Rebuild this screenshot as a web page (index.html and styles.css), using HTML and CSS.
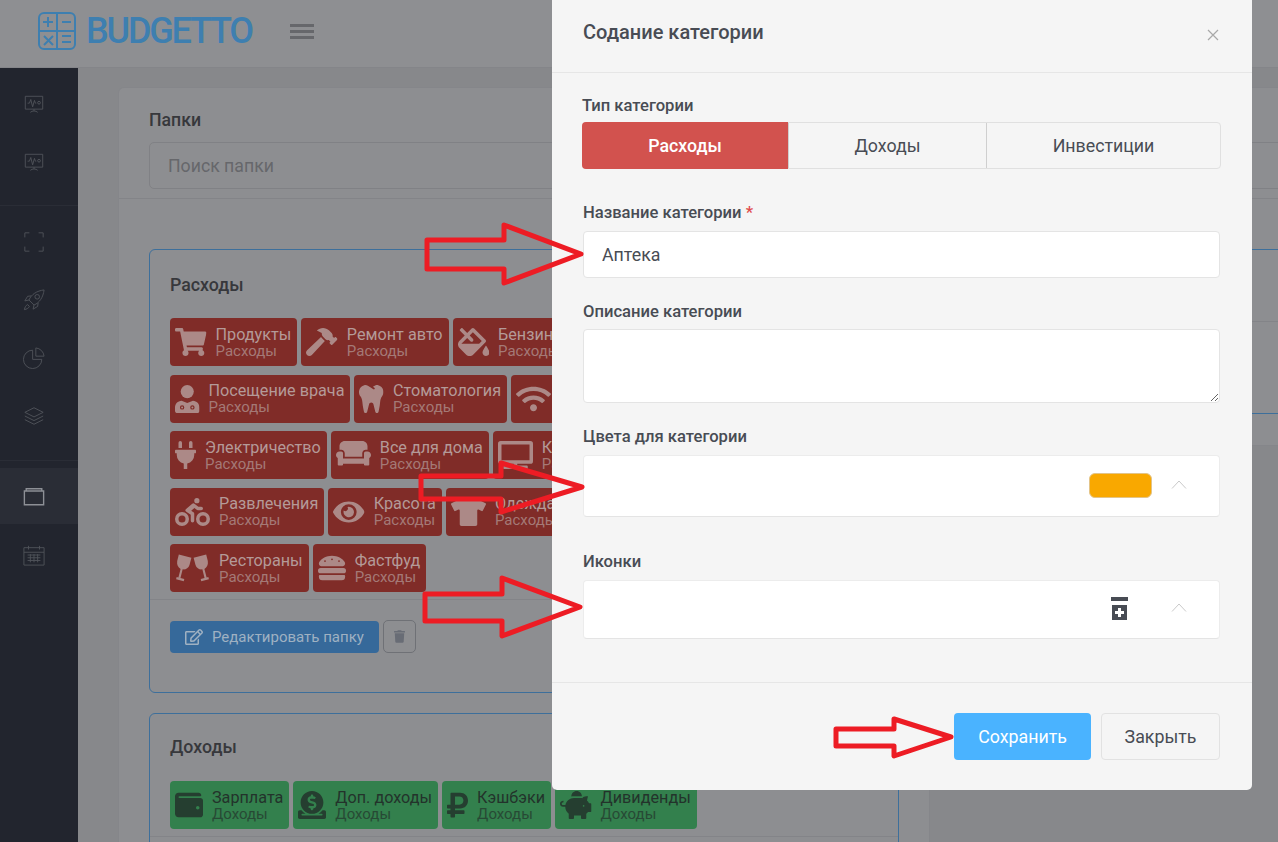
FILE: index.html
```html
<!DOCTYPE html>
<html lang="en">
<head>
    <meta charset="UTF-8">
    <title>Budgetto</title>
    <link rel="stylesheet" href="styles.css">
</head>
<body>
    <svg class="sprite" xmlns="http://www.w3.org/2000/svg">
        <symbol id="i-cart" viewBox="0 0 576 512"><path d="M528.12 301.319l47.273-208C578.806 78.301 567.391 64 551.99 64H159.208l-9.166-44.81C147.758 8.021 137.93 0 126.529 0H24C10.745 0 0 10.745 0 24v16c0 13.255 10.745 24 24 24h69.883l70.248 343.435C147.325 417.1 136 435.222 136 456c0 30.928 25.072 56 56 56s56-25.072 56-56c0-15.674-6.447-29.835-16.824-40h209.647C430.447 426.165 424 440.326 424 456c0 30.928 25.072 56 56 56s56-25.072 56-56c0-22.172-12.888-41.332-31.579-50.405l5.517-24.276c3.413-15.018-8.002-29.319-23.403-29.319H218.117l-6.545-32h293.145c11.206 0 20.92-7.754 23.403-18.681z"/></symbol>
        <symbol id="i-hammer" viewBox="0 0 576 512"><path d="M571.31 193.94l-22.63-22.63c-6.25-6.25-16.38-6.25-22.63 0l-11.31 11.31-28.9-28.9c5.63-21.31.36-44.9-16.35-61.61l-45.25-45.25c-62.48-62.48-163.79-62.48-226.28 0l90.51 45.25v18.75c0 16.97 6.74 33.25 18.75 45.25l49.14 49.14c16.71 16.71 40.3 21.98 61.61 16.35l28.9 28.9-11.31 11.31c-6.25 6.25-6.25 16.38 0 22.63l22.63 22.63c6.25 6.25 16.38 6.25 22.63 0l90.51-90.51c6.23-6.24 6.23-16.37-.02-22.62zm-286.72-15.2c-3.7-3.7-6.84-7.79-9.85-11.95L19.64 404.96c-25.57 23.88-26.26 64.19-1.53 88.93s65.05 24.05 88.93-1.53l238.13-255.07c-3.96-2.91-7.9-5.9-11.44-9.44l-49.14-49.14z"/></symbol>
        <symbol id="i-fill" viewBox="0 0 576 512"><path d="M512 320s-64 92.65-64 128c0 35.35 28.66 64 64 64s64-28.65 64-64-64-128-64-128zm-9.37-102.94L294.94 9.37C288.69 3.12 280.5 0 272.31 0s-16.38 3.12-22.62 9.37l-81.58 81.58L81.93 4.76c-6.25-6.25-16.38-6.25-22.62 0L36.69 27.38c-6.24 6.25-6.24 16.38 0 22.62l86.19 86.18-94.76 94.76c-37.49 37.48-37.49 98.26 0 135.75l117.19 117.19c18.74 18.74 43.31 28.12 67.87 28.12 24.57 0 49.13-9.37 67.87-28.12l221.57-221.57c12.5-12.5 12.5-32.75.01-45.25zm-116.22 70.97H65.93c1.36-3.84 3.57-7.98 7.43-11.83l13.15-13.15 81.61-81.61 58.6 58.6c12.49 12.49 32.75 12.49 45.24 0 12.49-12.49 12.49-32.75 0-45.24l-58.6-58.6 58.95-58.95 162.44 162.44-48.34 48.34z"/></symbol>
        <symbol id="i-doctor" viewBox="0 0 448 512"><path d="M224 240a120 120 0 1 0 0-240 120 120 0 0 0 0 240z"/><path fill-rule="evenodd" d="M0 464v-50c0-70 50-122 120-126l104 40 104-40c70 4 120 56 120 126v50a48 48 0 0 1-48 48H48a48 48 0 0 1-48-48zM130 370a40 40 0 1 0 0 80 40 40 0 0 0 0-80zm0 22a18 18 0 1 1 0 36 18 18 0 0 1 0-36zM318 370a40 40 0 1 0 0 80 40 40 0 0 0 0-80zm0 22a18 18 0 1 1 0 36 18 18 0 0 1 0-36z"/></symbol>
        <symbol id="i-tooth" viewBox="0 0 448 512"><path d="M443.98 96.25c-11.01-45.22-47.11-82.06-92.01-93.72-32.19-8.36-63 5.1-89.14 24.33-3.25 2.39-6.96 3.73-10.5 5.48l28.32 18.21c7.42 4.77 9.58 14.67 4.8 22.11-4.46 6.95-14.27 9.86-22.11 4.8L162.83 12.84c-20.7-10.85-43.38-16.4-66.81-10.31-44.9 11.67-81 48.5-92.01 93.72-10.13 41.62-.42 80.81 21.5 110.43 23.36 31.57 32.68 68.66 36.29 107.35 4.4 47.16 10.33 94.16 20.94 140.32l7.8 33.95c3.19 13.87 15.49 23.7 29.67 23.7 13.97 0 26.15-9.55 29.54-23.16l34.47-138.42c4.56-18.32 20.96-31.16 39.76-31.16s35.2 12.85 39.76 31.16l34.47 138.42c3.39 13.61 15.57 23.16 29.54 23.16 14.18 0 26.48-9.83 29.67-23.7l7.8-33.95c10.61-46.15 16.53-93.16 20.94-140.32 3.61-38.7 12.93-75.78 36.29-107.35 21.95-29.61 31.66-68.8 21.53-110.43z"/></symbol>
        <symbol id="i-wifi" viewBox="0 0 640 512"><path d="M634.91 154.88C457.74-8.99 182.19-8.93 5.09 154.88c-6.66 6.16-6.79 16.59-.35 22.98l34.24 33.97c6.14 6.1 16.02 6.23 22.4.38 145.92-133.68 371.3-133.71 517.25 0 6.38 5.85 16.26 5.71 22.4-.38l34.24-33.97c6.43-6.39 6.3-16.82-.36-22.98zM320 352c-35.35 0-64 28.65-64 64s28.65 64 64 64 64-28.65 64-64-28.65-64-64-64zm202.67-83.59c-115.26-101.93-290.21-101.82-405.34 0-6.9 6.1-7.12 16.69-.57 23.15l34.44 33.99c6 5.92 15.66 6.32 22.05.8 83.95-72.57 209.74-72.41 293.49 0 6.39 5.52 16.05 5.13 22.05-.8l34.44-33.99c6.56-6.46 6.33-17.06-.56-23.15z"/></symbol>
        <symbol id="i-plug" viewBox="0 0 384 512"><path d="M320,32a32,32,0,0,0-64,0v96h64Zm48,128H16A16,16,0,0,0,0,176v32a16,16,0,0,0,16,16H32v32A160.07,160.07,0,0,0,160,412.8V512h64V412.8A160.07,160.07,0,0,0,352,256V224h16a16,16,0,0,0,16-16V176A16,16,0,0,0,368,160ZM128,32a32,32,0,0,0-64,0v96h64Z"/></symbol>
        <symbol id="i-couch" viewBox="0 0 640 512"><path d="M160 224v64h320v-64c0-35.3 28.7-64 64-64h32V96c0-53-43-96-96-96H160C107 0 64 43 64 96v64h32c35.3 0 64 28.7 64 64zm416-32h-32c-17.7 0-32 14.3-32 32v96H128v-96c0-17.7-14.3-32-32-32H64c-35.3 0-64 28.7-64 64 0 23.6 13 44 32 55.1V432c0 8.8 7.2 16 16 16h64c8.8 0 16-7.2 16-16v-16h384v16c0 8.8 7.2 16 16 16h64c8.8 0 16-7.2 16-16V311.1c19-11.1 32-31.5 32-55.1 0-35.3-28.7-64-64-64z"/></symbol>
        <symbol id="i-tv" viewBox="0 0 640 512"><path d="M592 0H48A48 48 0 0 0 0 48v320a48 48 0 0 0 48 48h240v32H112a16 16 0 0 0-16 16v32a16 16 0 0 0 16 16h416a16 16 0 0 0 16-16v-32a16 16 0 0 0-16-16H352v-32h240a48 48 0 0 0 48-48V48a48 48 0 0 0-48-48zm-16 352H64V64h512z"/></symbol>
        <symbol id="i-bike" viewBox="0 0 640 512"><path d="M400 96a48 48 0 1 0-48-48 48 48 0 0 0 48 48zm-4 121a31.9 31.9 0 0 0 20 7h64a32 32 0 0 0 0-64h-52.78L356 103a31.94 31.94 0 0 0-40.81.68l-112 96a32 32 0 0 0 3.08 50.92L288 305.12V416a32 32 0 0 0 64 0V288a32 32 0 0 0-14.25-26.62l-41.36-27.57 58.25-49.92zm116 39a128 128 0 1 0 128 128 128 128 0 0 0-128-128zm0 192a64 64 0 1 1 64-64 64 64 0 0 1-64 64zM128 256a128 128 0 1 0 128 128 128 128 0 0 0-128-128zm0 192a64 64 0 1 1 64-64 64 64 0 0 1-64 64z"/></symbol>
        <symbol id="i-eye" viewBox="0 0 576 512"><path d="M572.52 241.4C518.29 135.59 410.93 64 288 64S57.68 135.64 3.48 241.41a32.35 32.35 0 0 0 0 29.19C57.71 376.41 165.07 448 288 448s230.32-71.64 284.52-177.41a32.35 32.35 0 0 0 0-29.19zM288 400a144 144 0 1 1 144-144 143.93 143.93 0 0 1-144 144zm0-240a95.31 95.31 0 0 0-25.31 3.79 47.85 47.85 0 0 1-66.9 66.9A95.78 95.78 0 1 0 288 160z"/></symbol>
        <symbol id="i-shirt" viewBox="0 0 640 512"><path d="M631.2 96.5L436.5 0C416.4 27.8 371.9 47.2 320 47.2S223.6 27.8 203.5 0L8.8 96.5c-7.9 4-11.1 13.6-7.2 21.5l57.2 114.5c4 7.9 13.6 11.1 21.5 7.2l56.6-27.7c10.6-5.2 23 2.5 23 14.4V480c0 17.7 14.3 32 32 32h256c17.7 0 32-14.3 32-32V226.3c0-11.8 12.4-19.6 23-14.4l56.6 27.7c7.9 4 17.5.8 21.5-7.2L638.3 118c4-7.9.8-17.6-7.1-21.5z"/></symbol>
        <symbol id="i-cheers" viewBox="0 0 640 512">
            <path d="M70 10L300 70L265 200C245 260 190 290 140 280L100 440L170 458L160 496L20 460L30 422L62 430L102 272C55 250 30 200 40 130Z"/>
            <path transform="matrix(-1 0 0 1 640 0)" d="M70 10L300 70L265 200C245 260 190 290 140 280L100 440L170 458L160 496L20 460L30 422L62 430L102 272C55 250 30 200 40 130Z"/>
        </symbol>
        <symbol id="i-burger" viewBox="0 0 512 512"><path d="M464 256H48a48 48 0 0 0 0 96h416a48 48 0 0 0 0-96zm16 128H32a16 16 0 0 0-16 16v16a64 64 0 0 0 64 64h352a64 64 0 0 0 64-64v-16a16 16 0 0 0-16-16zM58.64 224h394.72c34.57 0 54.62-43.9 34.82-75.88C448 83.2 359.55 32.1 256 32c-103.54.1-192 51.2-232.18 116.11C4 180.09 24.07 224 58.64 224zM384 112a16 16 0 1 1-16 16 16 16 0 0 1 16-16zM256 80a16 16 0 1 1-16 16 16 16 0 0 1 16-16zm-128 32a16 16 0 1 1-16 16 16 16 0 0 1 16-16z"/></symbol>
        <symbol id="i-wallet" viewBox="0 0 512 512"><path d="M461.2 128H80c-8.84 0-16-7.16-16-16s7.16-16 16-16h384c8.84 0 16-7.16 16-16 0-26.51-21.49-48-48-48H64C28.65 32 0 60.65 0 96v320c0 35.35 28.65 64 64 64h397.2c28.02 0 50.8-21.53 50.8-48V176c0-26.47-22.78-48-50.8-48zM416 336c-17.67 0-32-14.33-32-32s14.33-32 32-32 32 14.33 32 32-14.33 32-32 32z"/></symbol>
        <symbol id="i-donate" viewBox="0 0 512 512"><path d="M256 416c114.9 0 208-93.1 208-208S370.9 0 256 0 48 93.1 48 208s93.1 208 208 208zM233.8 97.4V80.6c0-9.2 7.4-16.6 16.6-16.6h11.1c9.2 0 16.6 7.4 16.6 16.6v17c15.5.8 30.5 6.1 43 15.4 5.6 4.1 6.2 12.3 1.2 17.1L306 145.6c-3.8 3.7-9.5 3.8-14 1-5.4-3.4-11.4-5.1-17.8-5.1h-38.9c-9 0-16.3 8.2-16.3 18.3 0 8.2 5 15.5 12.1 17.6l62.3 18.7c25.7 7.7 43.7 32.4 43.7 60.1 0 34-26.4 61.5-59.1 62.4v16.8c0 9.2-7.4 16.6-16.6 16.6h-11.1c-9.2 0-16.6-7.4-16.6-16.6v-17c-15.5-.8-30.5-6.1-43-15.4-5.6-4.1-6.2-12.3-1.2-17.1l16.3-15.5c3.8-3.7 9.5-3.8 14-1 5.4 3.4 11.4 5.1 17.8 5.1h38.9c9 0 16.3-8.2 16.3-18.3 0-8.2-5-15.5-12.1-17.6l-62.3-18.7c-25.7-7.7-43.7-32.4-43.7-60.1.1-34 26.4-61.5 59.1-62.4zM480 352h-32.5c-19.6 26-44.6 47.7-73 64h63.8c5.3 0 9.6 3.6 9.6 8v16c0 4.4-4.3 8-9.6 8H73.6c-5.3 0-9.6-3.6-9.6-8v-16c0-4.4 4.3-8 9.6-8h63.8c-28.4-16.3-53.3-38-73-64H32c-17.7 0-32 14.3-32 32v96c0 17.7 14.3 32 32 32h448c17.7 0 32-14.3 32-32v-96c0-17.7-14.3-32-32-32z"/></symbol>
        <symbol id="i-ruble" viewBox="0 0 384 512"><path d="M239.36 320C324.48 320 384 260.542 384 175.071S324.48 32 239.36 32H76c-6.627 0-12 5.373-12 12v206.632H12c-6.627 0-12 5.373-12 12V308c0 6.627 5.373 12 12 12h52v32H12c-6.627 0-12 5.373-12 12v44c0 6.627 5.373 12 12 12h52v52c0 6.627 5.373 12 12 12h58.56c6.627 0 12-5.373 12-12v-52H308c6.627 0 12-5.373 12-12v-44c0-6.627-5.373-12-12-12H146.56v-32h92.8zm-92.8-219.252h78.72c46.72 0 74.88 29.11 74.88 74.323 0 45.832-28.16 75.561-76.16 75.561h-77.44V100.748z"/></symbol>
        <symbol id="i-piggy" viewBox="0 0 576 512"><path d="M560 224h-29.5c-8.8-20-21.6-37.7-37.4-52.5L512 96h-32c-29.4 0-55.4 13.5-73 34.3-7.6-1.1-15.1-2.3-23-2.3H256c-77.4 0-141.9 55-156.8 128H56c-14.8 0-26.5-13.5-23.5-28.8C34.7 215.8 45.4 208 57 208h1c3.3 0 6-2.7 6-6v-20c0-3.3-2.7-6-6-6-28.5 0-53.9 20.4-57.5 48.6C-3.9 258.8 22.7 288 56 288h40c0 52.2 25.4 98.1 64 127.3V496c0 8.8 7.2 16 16 16h64c8.8 0 16-7.2 16-16v-48h128v48c0 8.8 7.2 16 16 16h64c8.8 0 16-7.2 16-16v-80.9c11.8-8.9 22.3-19.4 31.3-31.1H560c8.8 0 16-7.2 16-16V240c0-8.8-7.2-16-16-16zm-128 64c-8.8 0-16-7.2-16-16s7.2-16 16-16 16 7.2 16 16-7.2 16-16 16zM256 96h128c5.4 0 10.7.4 15.9.8 0-.3.1-.5.1-.8 0-53-43-96-96-96s-96 43-96 96c0 2.1.5 4.1.6 6.2 15.2-3.9 31-6.2 47.4-6.2z"/></symbol>
        <symbol id="i-edit" viewBox="0 0 576 512"><path d="M402.3 344.9l32-32c5-5 13.7-1.5 13.7 5.7V464c0 26.5-21.5 48-48 48H48c-26.5 0-48-21.5-48-48V112c0-26.5 21.5-48 48-48h273.5c7.1 0 10.7 8.6 5.7 13.7l-32 32c-1.5 1.5-3.5 2.3-5.7 2.3H48v352h352V350.5c0-2.1.8-4.1 2.3-5.6zm156.6-201.8L296.3 405.7l-90.4 10c-26.2 2.9-48.5-19.2-45.6-45.6l10-90.4L432.9 17.1c22.9-22.9 59.9-22.9 82.7 0l43.2 43.2c22.9 22.9 22.9 60 .1 82.8zM460.1 174L402 115.9 216.2 301.8l-7.3 65.3 65.3-7.3L460.1 174zm64.8-79.7l-43.2-43.2c-4.1-4.1-10.8-4.1-14.8 0L436 82l58.1 58.1 30.9-30.9c4-4.2 4-10.8-.1-14.9z"/></symbol>
        <symbol id="i-trash" viewBox="0 0 448 512"><path d="M432 32H312l-9.4-18.7A24 24 0 0 0 281.1 0H166.8a23.72 23.72 0 0 0-21.4 13.3L136 32H16A16 16 0 0 0 0 48v32a16 16 0 0 0 16 16h416a16 16 0 0 0 16-16V48a16 16 0 0 0-16-16zM53.2 467a48 48 0 0 0 47.9 45h245.8a48 48 0 0 0 47.9-45L416 128H32z"/></symbol>
        <symbol id="n-monitor" viewBox="0 0 24 24"><path d="M2.500 2.500h19v14h-19zM12 16.500v2M8 20c2-2 6-2 8 0M5 10h2l1.500-4 2 8 2-7 1 3h1"/><circle cx="17.500" cy="9.500" r="1.500"/></symbol>
        <symbol id="n-focus" viewBox="0 0 24 24"><path d="M2 7V2h5M17 2h5v5M22 17v5h-5M7 22H2v-5"/></symbol>
        <symbol id="n-rocket" viewBox="0 0 24 24"><path d="M23 1C15 2 9 6 6.500 12l5.500 5.500C18 15 22 9 23 1zM6.500 12L2 13l3-5 4-.5M12 17.500L11 22l5-3 .5-4M5 17c-2 1-3 3-3.500 5.500C4 22 6 21 7 19z"/><circle cx="15.500" cy="8.500" r="2.500"/></symbol>
        <symbol id="n-pie" viewBox="0 0 24 24"><path d="M10.500 3.500a10 10 0 1 0 10 10h-10zM14 1a10 10 0 0 1 9 9h-9z"/></symbol>
        <symbol id="n-layers" viewBox="0 0 24 24"><path d="M12 3l10 5-10 5L2 8zM2 12l10 5 10-5M2 16l10 5 10-5"/></symbol>
        <symbol id="n-window" viewBox="0 0 24 24"><path d="M1.500 5.500h21v15h-21zM3.500 3h17v2.500h-17z"/></symbol>
        <symbol id="n-calendar" viewBox="0 0 24 24"><path d="M1 4h22v19H1zM1 9h22M6 2v4M18 2v4M5 12h14M5 15h14M5 18h14M8 11v9M12 11v9M16 11v9"/></symbol>
    </svg>

    <header class="topbar">
        <a class="logo">
            <svg class="logo-icon" viewBox="0 0 38 38">
                <rect x="1" y="1" width="36" height="36" rx="5"/>
                <path d="M19 1v36M1 19h36M10 5v10M5 10h10M24 10h9M24 24h9M24 30h9M6 24l9 9M15 24l-9 9"/>
            </svg>
            <span class="logo-text">BUDGETTO</span>
        </a>
        <div class="burger"><span></span><span></span><span></span></div>
    </header>

    <div class="layout">
        <nav class="sidebar">
            <div class="nav-group">
                <div class="nav-item"><svg class="nav-icon"><use href="#n-monitor"/></svg></div>
                <div class="nav-item"><svg class="nav-icon"><use href="#n-monitor"/></svg></div>
            </div>
            <div class="nav-group">
                <div class="nav-item"><svg class="nav-icon"><use href="#n-focus"/></svg></div>
                <div class="nav-item"><svg class="nav-icon"><use href="#n-rocket"/></svg></div>
                <div class="nav-item"><svg class="nav-icon"><use href="#n-pie"/></svg></div>
                <div class="nav-item"><svg class="nav-icon"><use href="#n-layers"/></svg></div>
            </div>
            <div class="nav-group">
                <div class="nav-item active"><svg class="nav-icon"><use href="#n-window"/></svg></div>
                <div class="nav-item"><svg class="nav-icon"><use href="#n-calendar"/></svg></div>
            </div>
        </nav>

        <main class="content">
            <section class="panel">
                <div class="panel-head">
                    <div class="panel-title">Папки</div>
                    <div class="search">Поиск папки</div>
                </div>
                <div class="panel-body">
                    <div class="folder">
                        <div class="folder-title">Расходы</div>
                        <div class="tags">
                            <div class="tag-row">
                                <div class="tag red"><svg class="tag-icon w576"><use href="#i-cart"/></svg><div><div class="tag-name">Продукты</div><div class="tag-type">Расходы</div></div></div>
                                <div class="tag red"><svg class="tag-icon w576"><use href="#i-hammer"/></svg><div><div class="tag-name">Ремонт авто</div><div class="tag-type">Расходы</div></div></div>
                                <div class="tag red"><svg class="tag-icon w576"><use href="#i-fill"/></svg><div><div class="tag-name">Бензин</div><div class="tag-type">Расходы</div></div></div>
                            </div>
                            <div class="tag-row">
                                <div class="tag red"><svg class="tag-icon w448"><use href="#i-doctor"/></svg><div><div class="tag-name">Посещение врача</div><div class="tag-type">Расходы</div></div></div>
                                <div class="tag red"><svg class="tag-icon w448"><use href="#i-tooth"/></svg><div><div class="tag-name">Стоматология</div><div class="tag-type">Расходы</div></div></div>
                                <div class="tag red"><svg class="tag-icon w640"><use href="#i-wifi"/></svg><div><div class="tag-name">Интернет</div><div class="tag-type">Расходы</div></div></div>
                            </div>
                            <div class="tag-row">
                                <div class="tag red"><svg class="tag-icon w384"><use href="#i-plug"/></svg><div><div class="tag-name">Электричество</div><div class="tag-type">Расходы</div></div></div>
                                <div class="tag red"><svg class="tag-icon w640"><use href="#i-couch"/></svg><div><div class="tag-name">Все для дома</div><div class="tag-type">Расходы</div></div></div>
                                <div class="tag red"><svg class="tag-icon w640"><use href="#i-tv"/></svg><div><div class="tag-name">Кино</div><div class="tag-type">Расходы</div></div></div>
                            </div>
                            <div class="tag-row">
                                <div class="tag red"><svg class="tag-icon w640"><use href="#i-bike"/></svg><div><div class="tag-name">Развлечения</div><div class="tag-type">Расходы</div></div></div>
                                <div class="tag red"><svg class="tag-icon w576"><use href="#i-eye"/></svg><div><div class="tag-name">Красота</div><div class="tag-type">Расходы</div></div></div>
                                <div class="tag red"><svg class="tag-icon w640"><use href="#i-shirt"/></svg><div><div class="tag-name">Одежда</div><div class="tag-type">Расходы</div></div></div>
                            </div>
                            <div class="tag-row">
                                <div class="tag red"><svg class="tag-icon w640"><use href="#i-cheers"/></svg><div><div class="tag-name">Рестораны</div><div class="tag-type">Расходы</div></div></div>
                                <div class="tag red"><svg class="tag-icon w512"><use href="#i-burger"/></svg><div><div class="tag-name">Фастфуд</div><div class="tag-type">Расходы</div></div></div>
                            </div>
                        </div>
                        <div class="folder-foot">
                            <button class="btn-edit"><svg class="btn-edit-icon"><use href="#i-edit"/></svg>Редактировать папку</button>
                            <button class="btn-trash"><svg class="btn-trash-icon"><use href="#i-trash"/></svg></button>
                        </div>
                    </div>

                    <div class="folder">
                        <div class="folder-title">Доходы</div>
                        <div class="tags">
                            <div class="tag-row">
                                <div class="tag green"><svg class="tag-icon w512"><use href="#i-wallet"/></svg><div><div class="tag-name">Зарплата</div><div class="tag-type">Доходы</div></div></div>
                                <div class="tag green"><svg class="tag-icon w512"><use href="#i-donate"/></svg><div><div class="tag-name">Доп. доходы</div><div class="tag-type">Доходы</div></div></div>
                                <div class="tag green"><svg class="tag-icon w384"><use href="#i-ruble"/></svg><div><div class="tag-name">Кэшбэки</div><div class="tag-type">Доходы</div></div></div>
                                <div class="tag green"><svg class="tag-icon w576"><use href="#i-piggy"/></svg><div><div class="tag-name">Дивиденды</div><div class="tag-type">Доходы</div></div></div>
                            </div>
                        </div>
                        <div class="folder-foot"></div>
                    </div>
                </div>
            </section>

            <section class="panel side">
                <div class="panel-head">
                    <div class="panel-title">Шаблоны</div>
                    <div class="search"></div>
                </div>
                <div class="panel-body">
                    <div class="folder small">
                        <div class="small-top"></div>
                    </div>
                </div>
            </section>
        </main>
    </div>

    <div class="modal">
        <div class="modal-head">
            <div class="modal-title">Содание категории</div>
            <svg class="modal-close" viewBox="0 0 12 12"><path d="M1 1l10 10M11 1L1 11"/></svg>
        </div>
        <div class="modal-body">
            <div class="field-label first">Тип категории</div>
            <div class="segments">
                <div class="segment active">Расходы</div>
                <div class="segment">Доходы</div>
                <div class="segment">Инвестиции</div>
            </div>

            <div class="field-label">Название категории <span class="req">*</span></div>
            <input class="text-input" type="text" value="Аптека">

            <div class="field-label">Описание категории</div>
            <textarea class="text-area"></textarea>

            <div class="field-label">Цвета для категории</div>
            <div class="picker color">
                <div class="picker-value"><span class="swatch"></span></div>
                <svg class="chevron" viewBox="0 0 16 9"><path d="M1 8.500l7-7.500 7 7.500"/></svg>
            </div>

            <div class="field-label wide">Иконки</div>
            <div class="picker icon">
                <div class="picker-value">
                    <svg class="bottle" viewBox="0 0 17 23">
                        <rect width="17" height="4"/>
                        <rect x="1" y="8" width="15" height="15"/>
                        <path class="bottle-plus" d="M7 11h3v3h3v3h-3v3H7v-3H4v-3h3z"/>
                    </svg>
                </div>
                <svg class="chevron" viewBox="0 0 16 9"><path d="M1 8.500l7-7.500 7 7.500"/></svg>
            </div>
        </div>
        <div class="modal-foot">
            <button class="btn-save">Сохранить</button>
            <button class="btn-close">Закрыть</button>
        </div>
    </div>

    <svg class="arrows" viewBox="0 0 1278 842">
        <path d="M427 240h77v-15l77 29-77 29v-14h-77z"/>
        <path d="M421 476h80v-13l81 24-81 25v-13h-80z"/>
        <path d="M425 594h77v-16l78 29-78 29v-15h-77z"/>
        <path d="M836 729h58v-10l57 18-57 19v-10h-58z"/>
    </svg>
</body>
</html>
```

FILE: styles.css
```css
* {
    box-sizing: border-box;
}

html, body {
    margin: 0;
    height: 842px;
    overflow: hidden;
}

body {
    position: relative;
    font-family: Roboto, "Liberation Sans", sans-serif;
    background-color: #87888b;
    color: #37383c;
}

.sprite {
    display: none;
}

/* top bar */
.topbar {
    height: 68px;
    display: flex;
    align-items: center;
    background-color: #8e8f92;
    border-bottom: 1px solid #848589;
    padding: 0 0 5px 38px;
}

.logo {
    display: flex;
    align-items: center;
    width: 252px;
}

.logo-icon {
    width: 38px;
    height: 38px;
    margin-right: 10px;
    fill: none;
    stroke: #3e7fb0;
    stroke-width: 2;
}

.logo-text {
    font-size: 36px;
    font-weight: 500;
    letter-spacing: -2.200px;
    color: #3e7fb0;
    line-height: 38px;
}

.burger {
    width: 24px;
    display: flex;
    flex-direction: column;
    gap: 3px;
}

.burger span {
    height: 3px;
    background-color: #66676b;
}

/* sidebar */
.layout {
    display: flex;
    height: 774px;
}

.sidebar {
    width: 78px;
    flex-shrink: 0;
    background-color: #22252e;
    padding-top: 8px;
}

.nav-group {
    padding-bottom: 15px;
    margin-bottom: 7px;
    border-bottom: 1px solid #2a2d36;
}

.nav-group:first-child {
    padding-bottom: 13px;
}

.nav-group:last-child {
    border-bottom: none;
}

.nav-item {
    height: 58px;
    display: flex;
    align-items: center;
    padding-left: 23px;
}

.nav-item.active {
    height: 56px;
    margin-bottom: 2px;
    padding-top: 2px;
    background-color: #2a2d36;
}

.nav-icon {
    width: 22px;
    height: 22px;
    fill: none;
    stroke: #50535a;
    stroke-width: 1;
}

.nav-item.active .nav-icon {
    stroke: #8d9096;
    stroke-width: 1.500;
}

/* cards */
.content {
    display: flex;
    gap: 15px;
    padding: 19px 0 0 40px;
    height: 100%;
    overflow: hidden;
}

.panel {
    width: 812px;
    flex-shrink: 0;
    background-color: #8d8e91;
    border: 1px solid #85868a;
    border-bottom: none;
    border-radius: 6px 6px 0 0;
    overflow: hidden;
}

.panel-head {
    padding: 23px 30px 9px;
    border-bottom: 1px solid #838488;
}

.panel-title {
    font-size: 17.700px;
    font-weight: 500;
    line-height: 19px;
    margin-bottom: 12px;
}

.search {
    height: 47px;
    border: 1px solid #808185;
    border-radius: 5px;
    padding-left: 18px;
    font-size: 17.700px;
    line-height: 47px;
    color: #66676b;
}

.panel-body {
    padding: 50px 30px 0;
}

.folder {
    border: 1px solid #3d6f9b;
    border-radius: 6px;
    margin-bottom: 20px;
}

.folder-title {
    padding: 25px 20px 0;
    font-size: 17.800px;
    font-weight: 500;
    line-height: 19px;
    margin-bottom: 24px;
}

.folder + .folder .folder-title {
    padding-top: 23px;
    margin-bottom: 25px;
}

.tags {
    padding: 0 20px;
}

.tag-row {
    display: flex;
    gap: 4px;
    margin-bottom: 8.500px;
}

.tag-row:last-child {
    margin-bottom: 7px;
}

.tag {
    height: 48px;
    flex-shrink: 0;
    display: flex;
    align-items: center;
    padding: 0 6px 0 5px;
    border-radius: 4px;
}

.tag.red {
    background-color: #802c28;
    color: #b49a98;
}

.tag.green {
    background-color: #33804d;
    color: #23332b;
}

.tag-icon {
    height: 28px;
    margin-right: 9px;
    fill: currentColor;
    opacity: 0.85;
}

.w384 { width: 21px; }
.w448 { width: 24.500px; }
.w512 { width: 28px; }
.w576 { width: 31.500px; }
.w640 { width: 35px; }

.tag-name {
    font-size: 16.200px;
    line-height: 18px;
    margin-top: -1px;
    white-space: nowrap;
}

.tag-type {
    font-size: 15px;
    line-height: 14px;
    opacity: 0.7;
    white-space: nowrap;
}

.folder-foot {
    display: flex;
    align-items: flex-start;
    gap: 4px;
    border-top: 1px solid #838488;
    padding: 21px 20px 39px;
}

.btn-edit {
    height: 32px;
    width: 209px;
    display: flex;
    align-items: center;
    padding: 0 0 0 15px;
    border: none;
    border-radius: 4px;
    background-color: #36699a;
    color: #9fb1c2;
    font-family: inherit;
    font-size: 15px;
}

.btn-edit-icon {
    width: 18px;
    height: 16px;
    margin-right: 9px;
    fill: currentColor;
}

.btn-trash {
    width: 33px;
    height: 33px;
    margin-top: -1px;
    display: flex;
    align-items: center;
    justify-content: center;
    padding: 0;
    background: none;
    border: 1px solid #6f7176;
    border-radius: 5px;
}

.btn-trash-icon {
    width: 11px;
    height: 13px;
    fill: #686c75;
}

.small {
    height: 165px;
}

.small-top {
    height: 72px;
    border-bottom: 1px solid #838488;
}

.side {
    height: 359px;
    border-bottom: 1px solid #85868a;
}

/* modal */
.modal {
    position: absolute;
    left: 552px;
    top: 0;
    width: 700px;
    height: 790px;
    background-color: #f5f5f5;
    border-radius: 0 0 5px 5px;
    color: #484c54;
}

.modal-head {
    height: 73px;
    display: flex;
    justify-content: space-between;
    padding: 22px 33px 0 31px;
    border-bottom: 1px solid #e6e6e6;
}

.modal-title {
    font-size: 20px;
    font-weight: 500;
    line-height: 21px;
}

.modal-close {
    width: 12px;
    height: 12px;
    margin-top: 7px;
    fill: none;
    stroke: #a8a8a8;
    stroke-width: 1.200;
}

.modal-body {
    height: 610px;
    padding: 23px 32px 0 31px;
    border-bottom: 1px solid #e6e6e6;
}

.field-label {
    font-size: 16.600px;
    font-weight: 500;
    line-height: 18px;
    padding-top: 1px;
    margin: 24px 0 9px;
}

.field-label.first {
    margin: 0 0 7px -1px;
}

.field-label.wide {
    margin-top: 35px;
}

.req {
    color: #e04b4b;
}

.segments {
    display: grid;
    grid-template-columns: 205px 198px 1fr;
    height: 47px;
    margin: 0 -1px 34px;
    border: 1px solid #e0e0e0;
    border-radius: 4px;
}

.segment {
    display: flex;
    align-items: center;
    justify-content: center;
    font-size: 17.800px;
    border-left: 1px solid #cfcfcf;
}

.segment.active {
    margin: -1px 0 -1px -1px;
    background-color: #d2524e;
    color: #fff;
    font-weight: 500;
    border: none;
    border-radius: 4px 0 0 4px;
}

.text-input,
.text-area {
    display: block;
    width: 100%;
    border: 1px solid #e4e4e4;
    border-radius: 4px;
    background-color: #fff;
    font-family: inherit;
    font-size: 17.800px;
    color: #484c54;
    outline: none;
}

.text-input {
    height: 47px;
    padding: 0 18px;
}

.text-area {
    height: 74px;
    margin-top: -1px;
}

.picker {
    display: flex;
    align-items: center;
    justify-content: flex-end;
    padding-right: 32px;
    background-color: #fff;
    border: 1px solid #ececec;
    border-bottom-color: #e4e4e4;
    border-radius: 4px;
}

.picker.color {
    height: 62px;
}

.picker.icon {
    height: 59px;
}

.picker-value {
    width: 63px;
    margin-top: -1px;
    margin-right: 19px;
    display: flex;
    justify-content: center;
}

.swatch {
    width: 63px;
    height: 25px;
    background-color: #f9a800;
    border: 1px solid #e3c488;
    border-radius: 6px;
}

.chevron {
    width: 16px;
    height: 9px;
    margin-top: -4px;
    fill: none;
    stroke: #c9c9c9;
    stroke-width: 1;
}

.bottle {
    width: 17px;
    height: 23px;
    margin: -1px 0 0 -2px;
    fill: #484c54;
}

.bottle-plus {
    fill: #fff;
}

.modal-foot {
    display: flex;
    justify-content: flex-end;
    gap: 10px;
    padding: 30px 32px 0;
}

.btn-save,
.btn-close {
    height: 47px;
    border-radius: 4px;
    font-family: inherit;
    font-size: 17.800px;
}

.btn-save {
    width: 137px;
    border: none;
    background-color: #4ab3ff;
    color: #fff;
}

.btn-close {
    width: 119px;
    border: 1px solid #e2e2e2;
    background-color: #f5f5f5;
    color: #484c54;
}

/* the red arrows on top of the screenshot */
.arrows {
    position: absolute;
    left: 0;
    top: 0;
    width: 1278px;
    height: 842px;
    pointer-events: none;
    fill: none;
    stroke: #ed1c24;
    stroke-width: 5;
    stroke-linejoin: round;
}
```
